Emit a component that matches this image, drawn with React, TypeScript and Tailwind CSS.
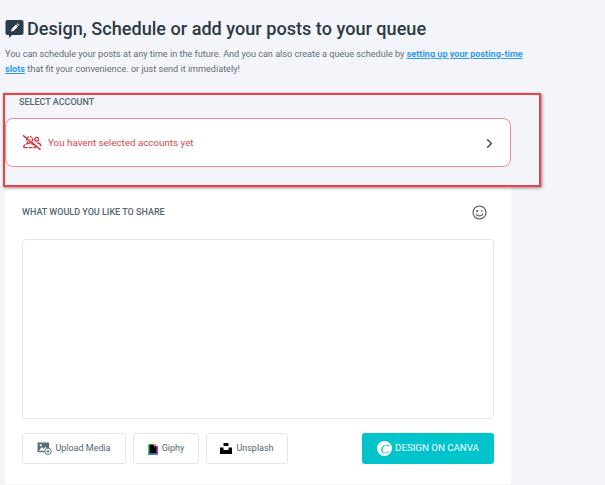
import { ChevronRight } from 'lucide-react';

const font = { fontFamily: 'Roboto, sans-serif' };

function HeadingIcon() {
    return (
        <svg width="19" height="20" viewBox="0 0 19 20" className="shrink-0">
            <path d="M2.5 1h14A2 2 0 0 1 18.500 3v11a2 2 0 0 1-2 2H7l-3 3v-3H2.500a2 2 0 0 1-2-2V3a2 2 0 0 1 2-2z" fill="#2b3d4a" />
            <path d="M6 12.500l.6-2.500 4.400-4.400 1.900 1.900-4.400 4.400zM11.700 4.900l.7-.7 1.900 1.900-.7.700z" fill="#fff" />
        </svg>
    );
}

function NoAccountsIcon() {
    return (
        <svg width="20" height="17" viewBox="0 0 21 18" fill="none" stroke="#d9343c" strokeWidth="1.400" className="shrink-0">
            <path d="M1 1.500l18.500 15" strokeWidth="1.500" />
            <circle cx="8" cy="6" r="3.200" strokeDasharray="2 1" />
            <path d="M1.500 14.500c0-3 2.500-4.500 6-4.500s6.500 1.500 6.500 4.500z" strokeDasharray="4 1" />
            <circle cx="15.500" cy="5.500" r="2" />
            <path d="M16 9.500c2.200 0 3.800 1.200 3.800 3.500" />
        </svg>
    );
}

function SmileIcon() {
    return (
        <svg width="15" height="15" viewBox="0 0 16 16" fill="none" stroke="#3f4f5a" strokeWidth="1.100" className="mr-[7px]">
            <circle cx="8" cy="8" r="6.900" />
            <circle cx="5.500" cy="6.300" r="0.500" fill="#3f4f5a" />
            <path d="M9.500 6.300h2" />
            <path d="M4.300 9.500c1 3 6.400 3 7.400 0" />
        </svg>
    );
}

function UploadIcon() {
    return (
        <svg width="15" height="13" viewBox="0 0 16 14">
            <rect x="0.500" y="0.500" width="12.500" height="10.500" fill="#5d6f7a" />
            <path d="M2 9.500l3-4 2 2 2-2.500 3 4.500z" fill="#fff" />
            <circle cx="4" cy="3.500" r="1.200" fill="#fff" />
            <circle cx="11.800" cy="10" r="3.500" fill="#fff" stroke="#5d6f7a" />
            <path d="M11.800 8.200v3.600M10 10h3.600" stroke="#5d6f7a" />
        </svg>
    );
}

function GiphyIcon() {
    return (
        <svg width="10" height="12" viewBox="0 0 11 13">
            <rect x="0" y="1" width="1.500" height="11" fill="#00e6a0" />
            <rect x="0" y="11.500" width="11" height="1.500" fill="#3a6cf6" />
            <rect x="9.500" y="3" width="1.500" height="9" fill="#9933ff" />
            <rect x="1" y="0" width="5" height="1.500" fill="#fff35c" />
            <rect x="7" y="1" width="2" height="2" fill="#ff5b5b" />
            <path d="M1.500 1.500h5v2h3v8h-8z" fill="#000" />
        </svg>
    );
}

function UnsplashIcon() {
    return (
        <svg width="12" height="11" viewBox="0 0 12 11">
            <rect x="3.500" y="0" width="5" height="3" fill="#000" />
            <path d="M0 4.500h3.500v2.500h5V4.500H12V11H0z" fill="#000" />
        </svg>
    );
}

function App() {
    return (
        <div style={font} className="relative w-[605px] h-[485px] overflow-hidden bg-[#f4f5fb]">
            <div className="pl-[5px] pt-[19px]">
                <div className="flex items-center gap-[3px] h-[20px]">
                    <HeadingIcon />
                    <h1 className="text-[18.100px] leading-[20px] font-medium text-[#2b3a45] whitespace-nowrap">Design, Schedule or add your posts to your queue</h1>
                </div>
                <p className="mt-[8px] w-[525px] text-[9.100px] leading-[14.500px] text-[#5f6d77]">
                    You can schedule your posts at any time in the future. And you can also create a queue schedule by <a className="font-bold text-[#2f9bf0] underline">setting up your posting-time slots</a> that fit your convenience. or just send it immediately!
                </p>
            </div>

            <div className="ml-[5px] w-[506px]">
                <div className="mt-[21px] pl-[14px] h-[11px] text-[9px] leading-[11px] font-medium uppercase text-[#566670]">Select Account</div>
                <div className="mt-[10px] h-[49px] flex items-center rounded-[8px] border border-[#f08a8f] bg-white pl-[16px] pr-[13px]">
                    <NoAccountsIcon />
                    <span className="ml-[6px] mt-[1px] text-[9.800px] text-[#d9474f]">You havent selected accounts yet</span>
                    <ChevronRight size={15} strokeWidth={2.500} className="ml-auto mt-[1px] text-[#3f4f5a]" />
                </div>

                <div className="mt-[18px] h-[299px] bg-white px-[17px] pt-[17px]">
                    <div className="flex items-center justify-between h-[20px]">
                        <span className="mt-[1px] text-[9px] font-medium uppercase text-[#566670]">What would you like to share</span>
                        <SmileIcon />
                    </div>
                    <div className="mt-[17px] h-[180px] w-[472px] rounded-[4px] border border-[#e4e6ea] bg-white"></div>
                    <div className="mt-[14px] flex w-[472px] text-[9px] text-[#566670]">
                        <button className="h-[31px] w-[104px] flex items-center justify-center gap-[3px] rounded-[3px] border border-[#e4e6ea] bg-white">
                            <UploadIcon />Upload Media
                        </button>
                        <button className="ml-[7px] h-[31px] w-[66px] flex items-center justify-center gap-[4px] rounded-[3px] border border-[#e4e6ea] bg-white">
                            <GiphyIcon />Giphy
                        </button>
                        <button className="ml-[7px] h-[31px] w-[82px] flex items-center justify-center gap-[4px] rounded-[3px] border border-[#e4e6ea] bg-white">
                            <UnsplashIcon />Unsplash
                        </button>
                        <button className="ml-auto h-[31px] w-[132px] flex items-center justify-center gap-[3px] rounded-[3px] bg-[#00c4cc] text-[9.700px] text-white">
                            <span className="flex size-[15px] items-center justify-center rounded-full bg-white text-[13px] italic leading-none text-[#00c4cc]" style={{ fontFamily: '"Liberation Serif", serif' }}>C</span>
                            DESIGN ON CANVA
                        </button>
                    </div>
                </div>
            </div>

            <div className="absolute left-[3px] top-[93px] w-[538px] h-[94px] border-2 border-[#f04044] shadow-[1px_1px_3px_rgba(0,0,0,0.45)]"></div>
        </div>
    );
}

export default App;
